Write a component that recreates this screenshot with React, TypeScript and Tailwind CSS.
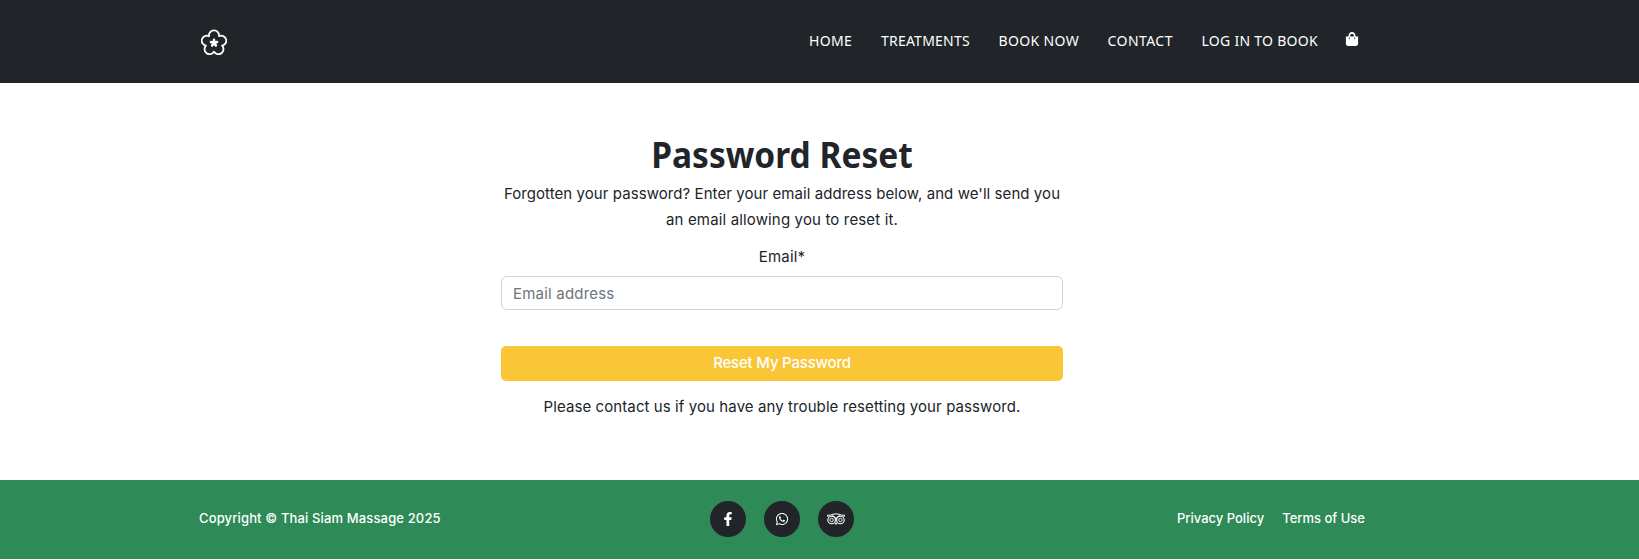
import { FaFacebookF, FaShoppingBag, FaWhatsapp } from "react-icons/fa";

const links = [
  { label: "HOME", style: "w-[72px] tracking-[0.3px]" },
  { label: "TREATMENTS", style: "w-[117.5px] tracking-[0.22px]" },
  { label: "BOOK NOW", style: "w-[109px] tracking-[0.35px]" },
  { label: "CONTACT", style: "w-[94px] tracking-[0.45px]" },
  { label: "LOG IN TO BOOK", style: "w-[144.5px] tracking-[0.28px]" },
];

function FlowerLogo() {
  return (
    <svg viewBox="0 0 26 26" className="size-[26px]" fill="none" stroke="white" aria-hidden="true">
      <path
        d="M8 7.2 A5.05 5.05 0 1 1 18 7.2 A5.05 5.05 0 1 1 21.1 16.7 A5.05 5.05 0 1 1 13 22.6 A5.05 5.05 0 1 1 4.9 16.7 A5.05 5.05 0 1 1 8 7.2 Z"
        strokeWidth="1.8"
        strokeLinejoin="round"
      />
      <path
        d="M13 14 V10.7 M13 14 L16.1 13 M13 14 L14.9 16.6 M13 14 L11.1 16.6 M13 14 L9.9 13"
        strokeWidth="2.5"
        strokeLinecap="round"
      />
    </svg>
  );
}

function TripadvisorIcon() {
  return (
    <svg viewBox="0 0 18 12" className="h-[12px] w-[18px]" fill="none" stroke="white" aria-hidden="true">
      <circle cx="4.6" cy="7" r="3.8" strokeWidth="1.1" />
      <circle cx="13.4" cy="7" r="3.8" strokeWidth="1.1" />
      <circle cx="4.6" cy="7" r="1.7" strokeWidth="0.9" />
      <circle cx="13.4" cy="7" r="1.7" strokeWidth="0.9" />
      <path d="M0.3 2.2 H3.2 Q5.8 0.9 9 0.9 T14.8 2.2 H17.7 L16.6 4.4 M0.3 2.2 L1.4 4.4 M4.8 2.6 Q8.2 3 9 6.2 Q9.8 3 13.2 2.6" strokeWidth="1" />
      <path d="M7.7 9.8 L9 11.6 L10.3 9.8" fill="white" strokeWidth="0.7" />
    </svg>
  );
}

export default function App() {
  return (
    <div className="flex h-[559px] flex-col bg-white font-['Inter',sans-serif] text-[15px] text-[#212529]">
      <header className="h-[83px] bg-[#212529] pr-[75px]">
        <div className="mx-auto flex h-full w-[1166px] items-center justify-between">
          <a href="#" className="ml-[1.5px]">
            <FlowerLogo />
          </a>
          <nav className="flex items-center pr-[6px] pb-[2px] font-['Noto_Sans',sans-serif] text-[14px] leading-5 text-white">
            {links.map((link) => (
              <a key={link.label} href="#" className={`whitespace-nowrap ${link.style}`}>
                {link.label}
              </a>
            ))}
            <a href="#" aria-label="Bag" className="w-[13px] pb-[4px]">
              <FaShoppingBag size={14} className="-ml-px" />
            </a>
          </nav>
        </div>
      </header>

      <main className="flex-1 pr-[75px] text-center">
        <div className="mx-auto w-[562px] pt-[50px]">
          <h1 className="scale-x-[0.93] font-['Noto_Sans',sans-serif] text-[36px] leading-[44px] font-bold">
            Password Reset
          </h1>
          <p className="mt-[4px] leading-[26px]">
            <span className="tracking-[0.07px] whitespace-nowrap">
              Forgotten your password? Enter your email address below, and we'll send you
            </span>
            <br />
            <span className="tracking-[0.15px]">an email allowing you to reset it.</span>
          </p>
          <form className="mt-[11px]">
            <label htmlFor="email" className="block leading-[26px] tracking-[0.2px]">
              Email*
            </label>
            <input
              id="email"
              type="email"
              placeholder="Email address"
              className="mt-[6px] block h-[34px] w-full rounded-[6px] border border-[#ced4da] px-[11px] tracking-[0.2px] placeholder:text-[#6c757d]"
            />
            <button
              type="button"
              className="mt-[36px] block h-[35px] w-full rounded-[5px] bg-[#fac638] text-[15px] font-medium tracking-[-0.2px] text-white"
            >
              Reset My Password
            </button>
          </form>
          <p className="mt-[13px] leading-[26px] tracking-[0.09px]">
            Please contact us if you have any trouble resetting your password.
          </p>
        </div>
      </main>

      <footer className="h-[79px] bg-[#2e8b57] pr-[75px] text-[13px] font-medium text-white">
        <div className="mx-auto grid h-[78px] w-[1166px] grid-cols-3 items-center">
          <p className="tracking-[0.14px]">Copyright © Thai Siam Massage 2025</p>
          <div className="flex justify-center gap-[18px]">
            <a href="#" aria-label="Facebook" className="flex size-9 items-center justify-center rounded-full bg-[#212529]">
              <FaFacebookF size={14} />
            </a>
            <a href="#" aria-label="WhatsApp" className="flex size-9 items-center justify-center rounded-full bg-[#212529]">
              <FaWhatsapp size={14} />
            </a>
            <a href="#" aria-label="Tripadvisor" className="flex size-9 items-center justify-center rounded-full bg-[#212529]">
              <TripadvisorIcon />
            </a>
          </div>
          <div className="flex justify-end gap-[18px]">
            <a href="#">Privacy Policy</a>
            <a href="#">Terms of Use</a>
          </div>
        </div>
      </footer>
    </div>
  );
}
